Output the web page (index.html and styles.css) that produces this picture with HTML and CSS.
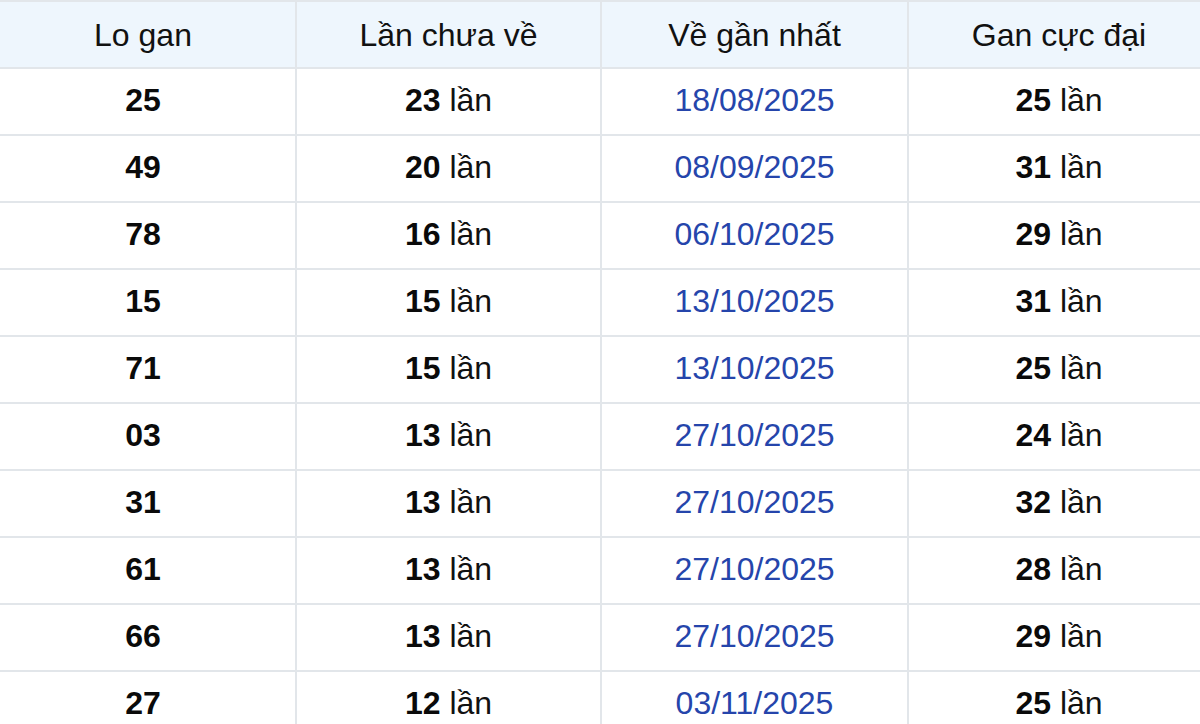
FILE: index.html
```html
<!DOCTYPE html>
<html lang="vi">
<head>
<meta charset="utf-8">
<title>Lo gan</title>
<link rel="stylesheet" href="styles.css">
</head>
<body>
<table class="gan">
<colgroup><col class="c1"><col class="c2"><col class="c3"><col class="c4"></colgroup>
<thead>
<tr><th>Lo gan</th><th>Lần chưa về</th><th>Về gần nhất</th><th>Gan cực đại</th></tr>
</thead>
<tbody>
<tr><td><b>25</b></td><td><b>23</b> lần</td><td class="date">18/08/2025</td><td><b>25</b> lần</td></tr>
<tr><td><b>49</b></td><td><b>20</b> lần</td><td class="date">08/09/2025</td><td><b>31</b> lần</td></tr>
<tr><td><b>78</b></td><td><b>16</b> lần</td><td class="date">06/10/2025</td><td><b>29</b> lần</td></tr>
<tr><td><b>15</b></td><td><b>15</b> lần</td><td class="date">13/10/2025</td><td><b>31</b> lần</td></tr>
<tr><td><b>71</b></td><td><b>15</b> lần</td><td class="date">13/10/2025</td><td><b>25</b> lần</td></tr>
<tr><td><b>03</b></td><td><b>13</b> lần</td><td class="date">27/10/2025</td><td><b>24</b> lần</td></tr>
<tr><td><b>31</b></td><td><b>13</b> lần</td><td class="date">27/10/2025</td><td><b>32</b> lần</td></tr>
<tr><td><b>61</b></td><td><b>13</b> lần</td><td class="date">27/10/2025</td><td><b>28</b> lần</td></tr>
<tr><td><b>66</b></td><td><b>13</b> lần</td><td class="date">27/10/2025</td><td><b>29</b> lần</td></tr>
<tr><td><b>27</b></td><td><b>12</b> lần</td><td class="date">03/11/2025</td><td><b>25</b> lần</td></tr>
</tbody>
</table>
</body>
</html>
```
FILE: styles.css
```css
html, body {
  margin: 0;
  padding: 0;
  background: #ffffff;
  overflow: hidden;
}
body {
  font-family: "Liberation Sans", Arial, sans-serif;
  color: #111111;
}
.gan {
  width: 1220px;
  margin-left: -11px;
  border-collapse: collapse;
  table-layout: fixed;
}
.c1 { width: 306px; }
.c2 { width: 305px; }
.c3 { width: 307px; }
.c4 { width: 302px; }
.gan th,
.gan td {
  height: 65px;
  padding: 0;
  border: 2px solid #e2e6ea;
  text-align: center;
  vertical-align: middle;
  font-size: 32px;
  line-height: 36px;
}
.gan th {
  background: #eef6fd;
  font-weight: normal;
  color: #111111;
}
.gan td {
  color: #111111;
  padding-bottom: 3px;
  height: 62px;
}
.gan td b {
  font-weight: bold;
  color: #0a0a0a;
}
.gan td.date {
  color: #2545ab;
}
```
